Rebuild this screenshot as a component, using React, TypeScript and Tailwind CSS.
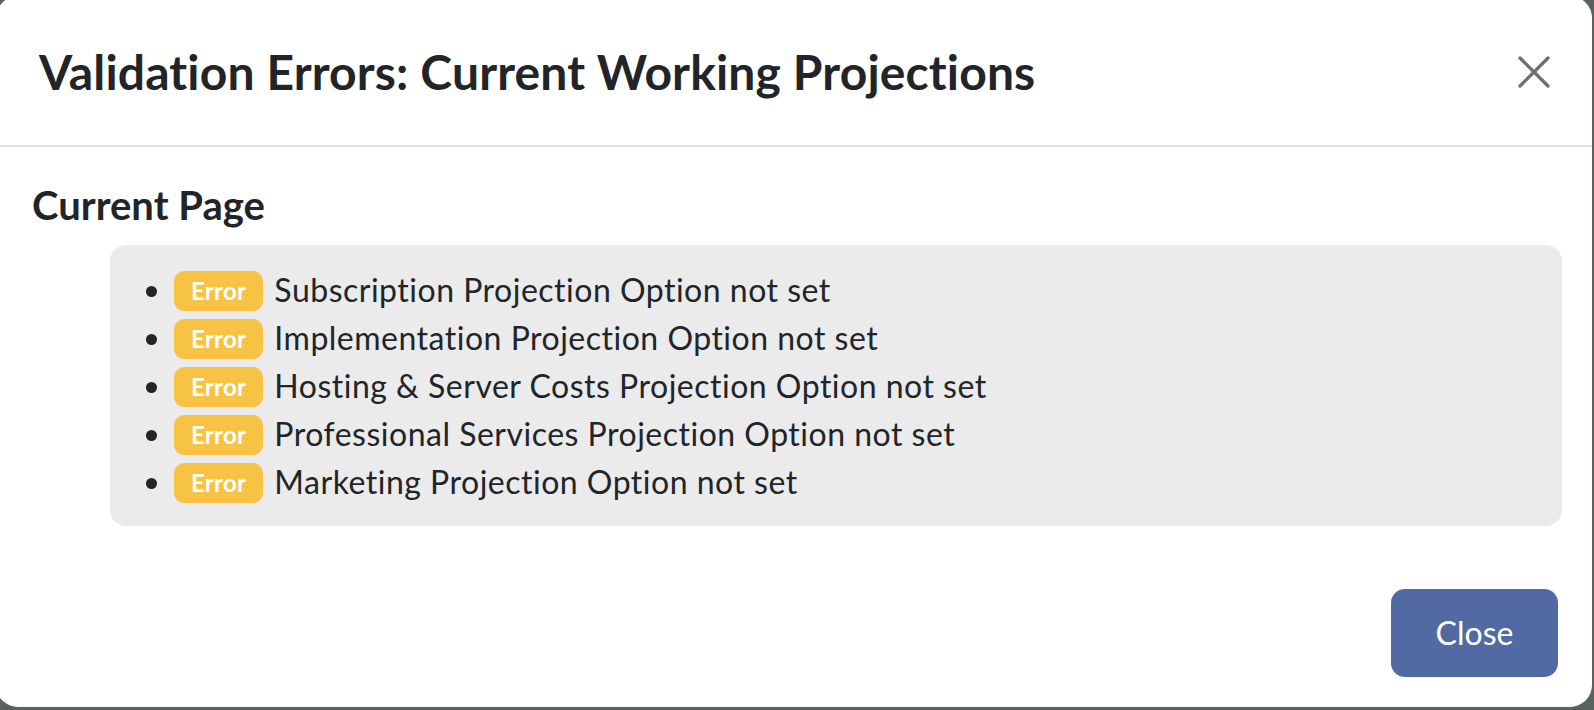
const errors = [
  'Subscription Projection Option not set',
  'Implementation Projection Option not set',
  'Hosting & Server Costs Projection Option not set',
  'Professional Services Projection Option not set',
  'Marketing Projection Option not set',
];

export default function App() {
  return (
    <div
      className="h-[710px] w-[1594px] overflow-hidden bg-[#5a625e] text-[#212529]"
      style={{ fontFamily: 'Lato, "Open Sans", sans-serif' }}
    >
      {/* Modal */}
      <div className="-mt-[4px] -ml-[4px] flex h-[711px] w-[1596px] flex-col rounded-[22px] bg-white">
        {/* Header */}
        <div className="flex h-[151px] shrink-0 items-center justify-between border-b-2 border-[#dee2e6] pt-[2px] pr-[42px] pl-[43px]">
          <h4 className="text-[48px] leading-none font-bold tracking-[0.15px]">Validation Errors: Current Working Projections</h4>
          <button className="flex h-[32px] w-[32px] items-center justify-center" aria-label="Close">
            <svg viewBox="0 0 32 32" className="h-[32px] w-[32px]">
              <path d="M2 2 L30 30 M30 2 L2 30" stroke="#6e6e6e" strokeWidth="3.2" strokeLinecap="round" />
            </svg>
          </button>
        </div>

        {/* Body */}
        <div className="flex-1 pt-[34px] pr-[30px] pl-[36px]">
          <h5 className="mb-[16px] text-[40px] leading-[48px] font-bold">Current Page</h5>
          <div className="ml-[78px] rounded-[16px] bg-[#ebebeb] pt-[21px] pb-[20px]">
            <ul className="list-disc pl-[64px] text-[32px] leading-[48px] tracking-[0.5px]">
              {errors.map((e) => (
                <li key={e}>
                  <span className="mr-[11px] inline-block rounded-[10px] bg-[#f6c344] px-[17px] py-[8px] align-[2px] text-[24px] leading-[24px] font-bold tracking-[0.3px] text-white">
                    Error
                  </span>
                  {e}
                </li>
              ))}
            </ul>
          </div>
        </div>

        {/* Footer */}
        <div className="flex justify-end pr-[34px] pb-[30px]">
          <button className="h-[88px] w-[167px] rounded-[14px] bg-[#516aa3] text-[32px] text-white">Close</button>
        </div>
      </div>
    </div>
  );
}
